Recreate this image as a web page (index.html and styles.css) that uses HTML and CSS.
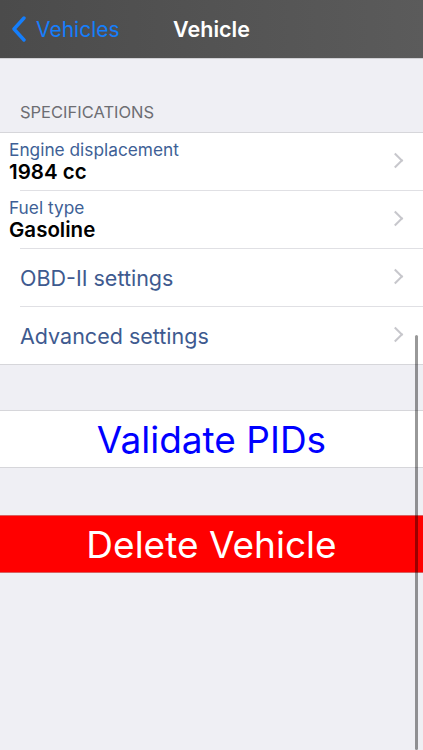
FILE: index.html
```html
<!DOCTYPE html>
<html lang="en">
<head>
  <meta charset="UTF-8">
  <meta name="viewport" content="width=device-width, initial-scale=1.0">
  <link rel="stylesheet" href="styles.css">
  <title>Vehicle</title>
</head>
<body>
  <div id="navbar">
    <a class="back" href="#">
      <svg class="chevron-back" width="16" height="26" viewBox="0 0 16 26">
        <path d="M13 2 L3 13 L13 24" fill="none" stroke="#157efb" stroke-width="3.4" stroke-linecap="round" stroke-linejoin="round"/>
      </svg>
      <span>Vehicles</span>
    </a>
    <h1>Vehicle</h1>
  </div>

  <div id="content">
    <div class="section-title">SPECIFICATIONS</div>
    <div class="group">
      <div class="row detail">
        <div class="text">
          <div class="label">Engine displacement</div>
          <div class="value">1984 cc</div>
        </div>
        <span class="arrow"></span>
      </div>
      <div class="row detail">
        <div class="text">
          <div class="label">Fuel type</div>
          <div class="value">Gasoline</div>
        </div>
        <span class="arrow"></span>
      </div>
      <div class="row link">
        <div class="text">OBD-II settings</div>
        <span class="arrow"></span>
      </div>
      <div class="row link">
        <div class="text">Advanced settings</div>
        <span class="arrow"></span>
      </div>
    </div>

    <div class="btn validate">Validate PIDs</div>
    <div class="btn delete">Delete Vehicle</div>
  </div>

  <div class="scrollbar"></div>
</body>
</html>
```

FILE: styles.css
```css
body {
  font-family: Inter, "Liberation Sans", Arial, sans-serif;
  background-color: #efeff4;
  margin: 0;
  height: 750px;
  overflow: hidden;
  position: relative;
}

#navbar {
  height: 58px;
  background: linear-gradient(to right, #4b4b4b, #5b5b5b);
  border-bottom: 1px solid #d0d0d4;
  display: flex;
  align-items: center;
  position: relative;
}

.back {
  display: flex;
  align-items: center;
  gap: 9px;
  padding-left: 11px;
  color: #157efb;
  text-decoration: none;
  font-size: 21px;
}

.chevron-back {
  display: block;
}

#navbar h1 {
  position: absolute;
  left: 0;
  right: 0;
  margin: 0;
  text-align: center;
  pointer-events: none;
  color: #fff;
  font-size: 21.5px;
  font-weight: 600;
}

.section-title {
  color: #6d6d72;
  font-size: 16.5px;
  line-height: 20px;
  padding: 43px 20px 10px;
}

.group {
  background-color: #fff;
  border-top: 1px solid #d6d6da;
  border-bottom: 1px solid #d6d6da;
}

.row {
  height: 57px;
  display: flex;
  align-items: center;
  justify-content: space-between;
  padding: 0 22px 0 20px;
  position: relative;
}

/* inset separator between rows */
.row + .row::before {
  content: "";
  position: absolute;
  top: -1px;
  left: 20px;
  right: 0;
  height: 1px;
  background-color: #e0e0e4;
}

.row + .row {
  margin-top: 1px;
}

.row.detail {
  padding-left: 9px;
}

.label {
  color: #3e5f96;
  font-size: 17.3px;
  line-height: 21px;
  margin-top: -2px;
}

.value {
  color: #000;
  font-size: 20.5px;
  font-weight: 600;
  line-height: 23px;
}

.link .text {
  color: #3e5a8f;
  font-size: 21.5px;
}

.arrow {
  width: 9px;
  height: 9px;
  border-top: 2px solid #c7c7cc;
  border-right: 2px solid #c7c7cc;
  transform: rotate(45deg);
  margin-top: -2px;
}

.btn {
  height: 56px;
  display: flex;
  align-items: center;
  justify-content: center;
}

.validate {
  margin-top: 45px;
  background-color: #fff;
  color: #0000ff;
  font-size: 37px;
  border-top: 1px solid #d6d6da;
  border-bottom: 1px solid #d6d6da;
}

.delete {
  margin-top: 47px;
  background-color: #ff0000;
  color: #fff;
  font-size: 37px;
  border-top: 1px solid #d86060;
  border-bottom: 1px solid #d86060;
}

.scrollbar {
  position: absolute;
  right: 5px;
  top: 335px;
  bottom: 0;
  width: 3px;
  border-radius: 2px;
  background-color: rgba(0, 0, 0, 0.4);
}
```
